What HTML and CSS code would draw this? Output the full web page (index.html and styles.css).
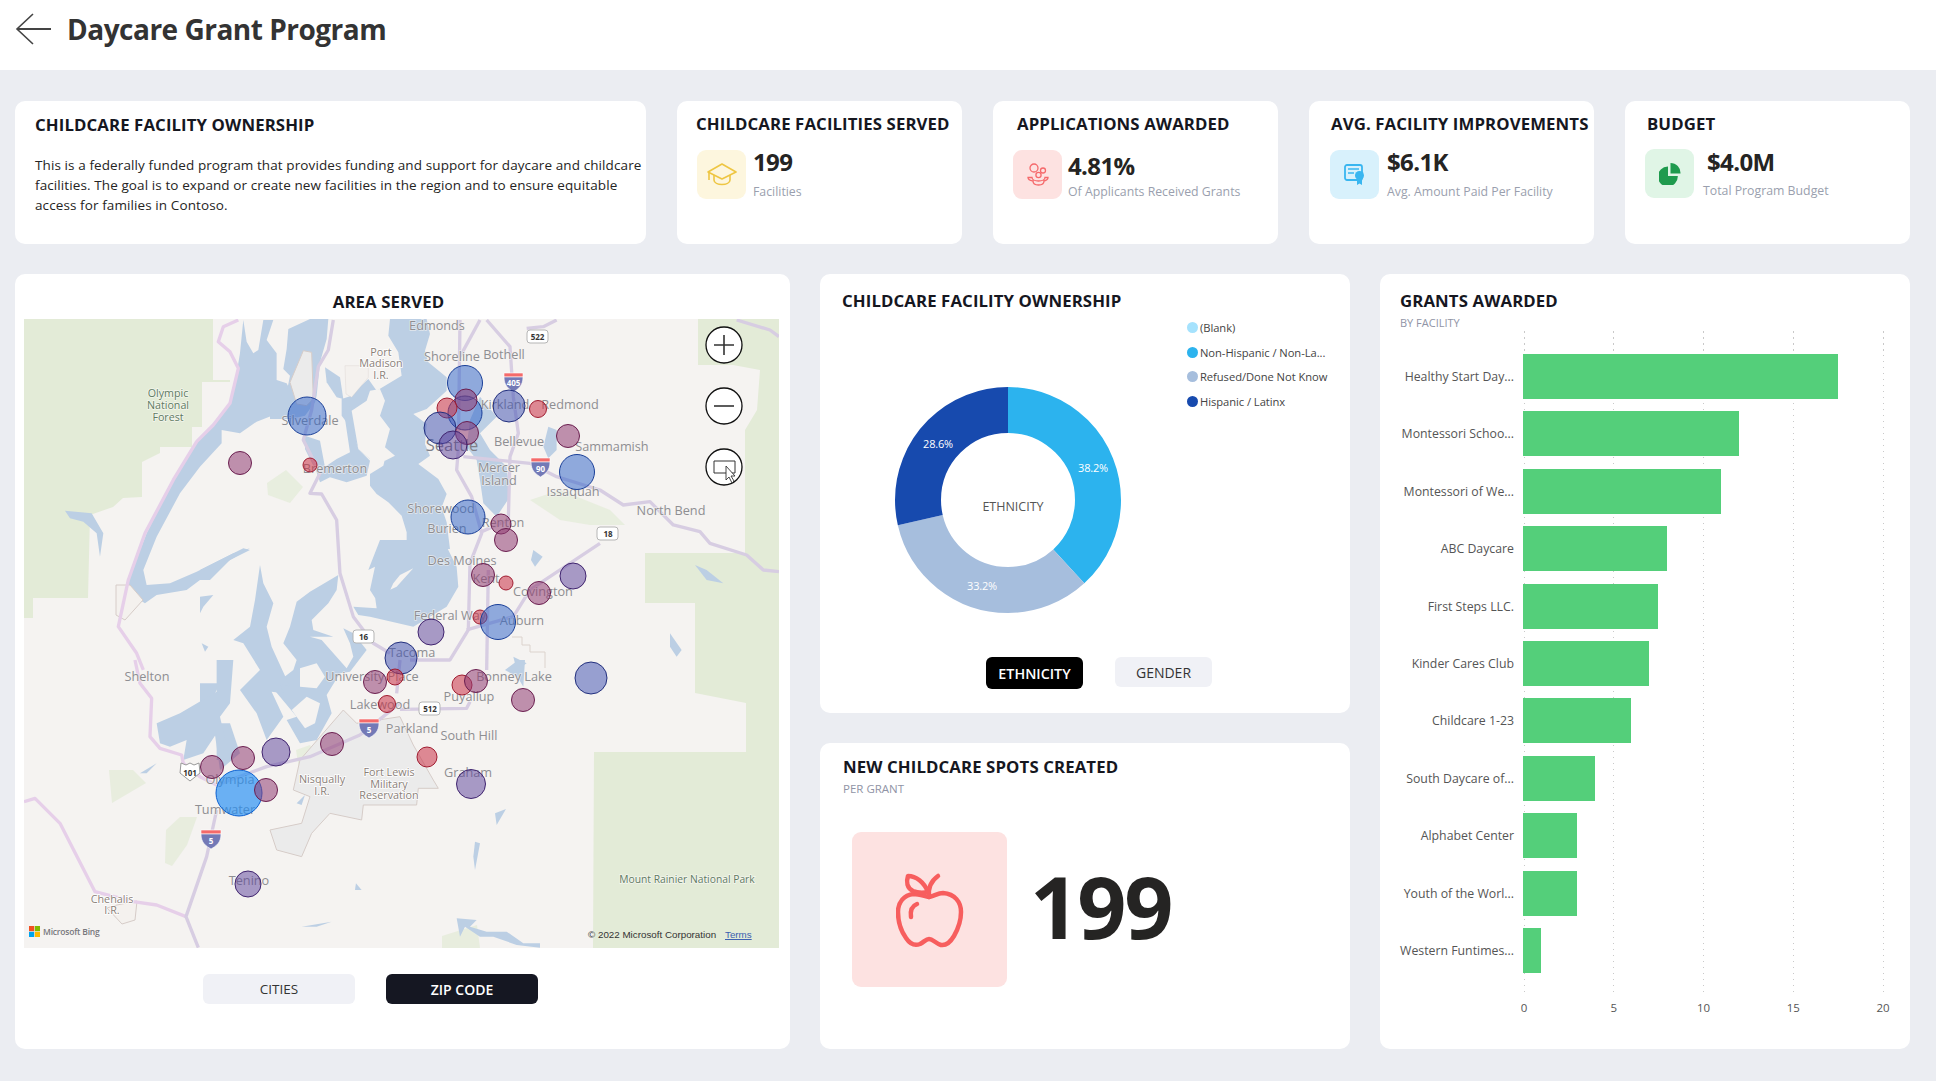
FILE: index.html
```html
<!DOCTYPE html>
<html lang="en">
<head>
<meta charset="utf-8">
<title>Daycare Grant Program</title>
<link rel="stylesheet" href="styles.css">
</head>
<body>
<div class="page">
  <header class="header">
    <svg class="back" viewBox="0 0 36 32" width="36" height="32"><path d="M18 1 2 16l16 15" fill="none" stroke="#444" stroke-width="1.6"/><path d="M2 16h34" stroke="#444" stroke-width="2.2"/></svg>
    <h1 class="page-title">Daycare Grant Program</h1>
  </header>

  <main class="dash">
    <section class="kpis">
      <article class="card about">
        <h2 class="title">CHILDCARE FACILITY OWNERSHIP</h2>
        <p class="about-text">This is a federally funded program that provides funding and support for daycare and childcare facilities. The goal is to expand or create new facilities in the region and to ensure equitable access for families in Contoso.</p>
      </article>

      <article class="card kpi kpi-a">
        <h2 class="title">CHILDCARE FACILITIES SERVED</h2>
        <div class="kpi-body">
          <div class="icon-box bg-yellow">
            <svg width="30" height="23" viewBox="0 0 30 23" fill="none" stroke="#eec643" stroke-width="1.6" stroke-linejoin="round"><path d="M15 1 29 9l-14 7L1 9z"/><path d="M7 12v5c0 6 16 6 16 0v-5"/><path d="M2 9v8"/></svg>
          </div>
          <div class="kpi-text">
            <div class="kpi-value">199</div>
            <div class="kpi-sub">Facilities</div>
          </div>
        </div>
      </article>

      <article class="card kpi kpi-b">
        <h2 class="title">APPLICATIONS AWARDED</h2>
        <div class="kpi-body">
          <div class="icon-box bg-red">
            <svg width="22" height="23" viewBox="0 0 22 23" fill="none" stroke="#f5696b" stroke-width="1.3"><circle cx="7" cy="5" r="4"/><circle cx="16" cy="7.5" r="2.5"/><circle cx="11.5" cy="12" r="2.6"/><path d="M1 14.5h4c0 2 3 3.5 6.500 3.500S18 16.500 18 14.500h3c0 2-2 3-4 3.500 0 2.500-2 4-5.500 4S6 20.500 6 18c-3-.5-5-1.500-5-3.500z"/></svg>
          </div>
          <div class="kpi-text">
            <div class="kpi-value">4.81%</div>
            <div class="kpi-sub">Of Applicants Received Grants</div>
          </div>
        </div>
      </article>

      <article class="card kpi kpi-c">
        <h2 class="title">AVG. FACILITY IMPROVEMENTS</h2>
        <div class="kpi-body">
          <div class="icon-box bg-blue">
            <svg width="21" height="22" viewBox="0 0 21 22"><rect x="1" y="1" width="17" height="15" rx="2" fill="none" stroke="#39b6f0" stroke-width="1.8"/><path d="M4 5h11M4 9h6" stroke="#39b6f0" stroke-width="1.6"/><path d="M13 14v7l2.500-1.500L18 21v-7z" fill="#39b6f0"/><circle cx="15.500" cy="11.500" r="4.500" fill="#39b6f0"/></svg>
          </div>
          <div class="kpi-text">
            <div class="kpi-value">$6.1K</div>
            <div class="kpi-sub">Avg. Amount Paid Per Facility</div>
          </div>
        </div>
      </article>

      <article class="card kpi kpi-d">
        <h2 class="title">BUDGET</h2>
        <div class="kpi-body">
          <div class="icon-box bg-green">
            <svg width="22" height="22" viewBox="0 0 22 22"><path d="M9 3.500V13h9.800A10 10 0 1 1 9 3.500z" fill="#1f9b4e"/><path d="M11.500 0A10 10 0 0 1 21.500 10.500h-10z" fill="#1f9b4e"/></svg>
          </div>
          <div class="kpi-text">
            <div class="kpi-value">$4.0M</div>
            <div class="kpi-sub">Total Program Budget</div>
          </div>
        </div>
      </article>
    </section>

    <section class="panels">
      <article class="card map-panel">
        <h2 class="title map-title">AREA SERVED</h2>
        <div class="map">
          <svg class="map-svg" viewBox="24 319 755 629" width="755" height="629">
            <rect class="land" x="24" y="319" width="755" height="629"/>
            <!-- forests -->
            <path class="forest" d="M24 319H213V380H230V382H202V427H192V447H160V453L142 462V497L123 498 113 507 90 515 88 598H33V618H24Z"/>
            <path class="forest" d="M698 319H779V948H593L594 752H746V703L695 693V603H645V553H745V430L757 410 760 370 733 365 698 365Z"/>
            <g class="patch">
              <path d="M267 483 286 470 303 487 290 503 268 495Z"/>
              <path d="M166 830 180 817 197 817 187 845 172 866 165 863Z"/>
              <path d="M109 770H133L146 783 112 803Z"/>
              <path d="M530 500 560 490 610 510 625 525 590 525 560 520Z"/>
              <path d="M296 750 310 745 332 775 300 775Z"/>
              <path d="M442 948V936L477 925 480 948Z"/>
            </g>

            <!-- reservation -->
            <g transform="translate(0 660) scale(.3333)">
              <path class="reserve" d="M1030 150 1070 190 1200 170 1240 255 1300 360 1315 385 1255 385 1250 435 1090 435 1085 480 990 460 935 520 905 590 830 570 810 510 905 490 930 410 880 390 900 300Z"/>
            </g>

            <!-- water: Hood canal and west side -->
            <g class="water" transform="translate(0 270) scale(.3333)">
              <path d="M730 150 720 250 710 310 690 400 650 450 590 510 520 630 440 790 385 930 380 965 435 1000 470 975 560 960 640 900 750 835 700 850 590 905 510 940 440 945 430 900 470 800 540 670 600 590 665 520 665 480 720 490 770 455 860 420 875 370 860 340 830 330 830 250 800 210 820 150 790 150 775 240 760 250 740 215Z"/>
              <path d="M195 722 275 730 310 790 300 860 290 790 250 755 210 745Z"/>
            </g>
            <!-- water: central sound -->
            <g class="water" transform="translate(270 319) scale(.3333)">
              <path d="M360 0 470 0 480 45 465 95 475 130 530 175 530 215 470 270 430 285 470 315 465 375 480 410 445 435 505 480 530 525 515 565 530 610 540 690 410 690 410 640 395 590 355 550 320 525 300 500 300 465 340 440 345 420 300 420 265 390 245 330 215 290 215 240 240 232 295 180 320 215 345 200 395 170 385 100 355 50Z"/>
              <path d="M165 145 210 175 220 240 200 235 170 190Z"/>
              <path d="M215 235 245 270 240 300 265 390 300 425 290 470 230 490 180 475 150 490 140 460 170 440 200 420 240 400 225 300Z"/>
              <path d="M105 350 150 365 165 445 140 460 120 420 105 390Z"/>
              <path d="M55 30 120 0 175 0 170 60 150 130 140 230 135 250 105 290 60 300 0 300 0 250 50 220 60 170 40 150 50 90Z"/>
            </g>
            <!-- water: lakes -->
            <g class="water" transform="translate(400 270) scale(.3333)">
              <path d="M240 380 290 440 240 490 270 540 320 590 330 680 290 740 250 700 240 630 230 570 200 530 210 450Z"/>
              <path d="M445 470 470 480 470 540 445 565 430 530Z"/>
              <path d="M400 840 428 860 405 890 393 870Z"/>
              <path d="M885 885 920 900 970 940 920 930Z"/>
              <path d="M810 1090 845 1140 830 1160 810 1130Z"/>
              <path d="M340 1160 380 1180 350 1200Z"/>
            </g>
            <!-- water: south sound -->
            <g class="water" transform="translate(200 540) scale(.3333)">
              <path d="M640 0 730 0 770 80 775 140 740 200 640 260 510 230 475 225 460 200 530 205 525 170 590 140 640 85 600 105 580 130 545 205 510 150 525 80 505 90 540 0Z"/>
              <path d="M415 105 330 155 290 185 270 260 250 310 290 360 280 390 215 440 290 530 260 540 300 610 350 600 395 520 380 465 420 400 450 395 500 330 460 280 430 265 450 310 460 350 440 385 365 300 330 290 400 290 340 270 335 240 385 190 410 150Z"/>
              <path d="M180 75 190 130 220 190 200 260 215 320 270 440 240 430 250 460 215 455 250 530 200 600 170 520 120 450 180 390 130 310 100 300 150 260 165 180Z"/>
              <path d="M0 90 130 25 150 30 90 60 30 120 0 120Z"/>
              <path d="M0 170 40 165 10 200 0 220Z"/>
              <path d="M0 430 60 430 40 470 0 530Z"/>
              <path d="M40 550 90 550 120 640 60 690Z"/>
              <path d="M5 310 25 320 15 335Z"/>
            </g>
            <g class="water" transform="translate(0 660) scale(.3333)">
              <path d="M480 250 470 190 540 160 650 95 650 0 700 0 690 130 660 170 690 300 650 300 650 220 610 280 550 300 560 240 510 260Z"/>
              <path d="M420 340 470 310 440 340Z"/>
              <path d="M890 430 915 405 905 435Z"/>
              <path d="M905 800 995 785 950 800Z"/>
              <path d="M1068 670 1085 690H1065Z"/>
              <path d="M765 575 785 565 760 578Z"/>
            </g>
            <g class="water" transform="translate(400 660) scale(.3333)">
              <path d="M170 775 230 780 210 800 260 815 320 815 370 850 420 850 420 863 350 855 280 830 240 830 195 800 180 830Z"/>
              <path d="M285 460 318 447 290 495Z"/>
              <path d="M225 545 240 550 225 630 220 590Z"/>
              <path d="M355 0 375 0 370 80 352 50 315 30Z"/>
            </g>
            <!-- land on top of the water -->
            <g class="land" transform="translate(270 319) scale(.3333)">
              <path d="M245 275 290 245 300 215 330 210 345 245 330 290 360 330 345 385 375 410 345 425 300 420 265 390Z"/>
            </g>
            <g class="land" transform="translate(200 540) scale(.3333)">
              <path d="M300 385 350 370 375 410 350 445 300 440Z"/>
              <path d="M275 510 320 470 360 490 345 550 315 565Z"/>
            </g>
            <g transform="translate(270 319) scale(.3333)">
              <path class="reserve" d="M100 95 125 100 130 240 110 260 80 255 60 190Z"/>
              <path class="reserve tint" d="M225 140H295V175L245 235 228 225Z"/>
            </g>
            <path class="reserve tint" d="M117 905 137 901 135 920 122 924 107 908Z"/>
            <path class="reserve tint" d="M116 585H130L143 600 125 620 116 615Z"/>
            <path class="outline" d="M512 637H522V645H530V652H545V668"/>

            <!-- roads -->
            <g class="road pink" transform="translate(0 270) scale(.3333)">
              <path d="M715 150 670 170 655 215 690 245 715 295 690 400 640 465 590 515 520 630 435 790 385 930 355 1070 410 1150 430 1200"/>
            </g>
            <g class="road pink" transform="translate(0 660) scale(.3333)">
              <path d="M405 0 420 70 455 115 450 230 480 265 545 285 550 310 600 350 650 375"/>
              <path d="M558 770 470 735 400 725 285 695 180 490 105 415 72 425"/>
            </g>
            <g class="road" transform="translate(0 270) scale(.3333)">
              <path d="M1000 150 985 240 955 290 935 420 910 510 960 610 930 670 965 672 1010 750 1020 910 1060 1040 1120 1120 1170 1150"/>
            </g>
            <g class="road" transform="translate(0 660) scale(.3333)">
              <path d="M650 450 620 590 558 770 595 863"/>
              <path d="M650 375 800 320 930 290 1080 225 1200 130"/>
            </g>
            <g class="road" transform="translate(400 270) scale(.3333)">
              <path d="M180 150 175 540 170 600 215 680 245 790 210 880 205 1080 150 1170 30 1170"/>
              <path d="M260 150 330 230 340 380 355 490 330 560 325 750 245 785"/>
              <path d="M190 560 390 580 470 620 600 660 670 705 750 695 820 765 900 785 930 820 1040 855 1090 900 1137 905"/>
              <path d="M200 1080 340 1040 390 960 600 820"/>
              <path d="M265 900 260 1200"/>
              <path d="M1010 150 1110 180 1137 200"/>
              <path d="M180 260 240 150"/>
              <path d="M470 150 430 170 380 175"/>
            </g>
            <g class="road" transform="translate(400 660) scale(.3333)">
              <path d="M0 148 200 145 210 125"/>
              <path d="M-10 100 0 0"/>
            </g>

            <!-- labels -->
            <g class="lbl-green">
              <text x="168" y="397">Olympic</text><text x="168" y="409">National</text><text x="168" y="421">Forest</text>
              <text class="lbl-park" x="687" y="883">Mount Rainier National Park</text>
            </g>
            <g class="lbl-small">
              <text x="381" y="356">Port</text><text x="381" y="367">Madison</text><text x="381" y="379">I.R.</text>
              <text x="322" y="783">Nisqually</text><text x="322" y="795">I.R.</text>
              <text x="389" y="776">Fort Lewis</text><text x="389" y="788">Military</text><text x="389" y="799">Reservation</text>
              <text x="112" y="903">Chehalis</text><text x="112" y="914">I.R.</text>
            </g>
            <g class="lbl">
              <text x="437" y="330">Edmonds</text><text x="452" y="361">Shoreline</text><text x="504" y="359">Bothell</text>
              <text x="310" y="425">Silverdale</text><text x="335" y="473">Bremerton</text>
              <text x="505" y="409">Kirkland</text><text x="570" y="409">Redmond</text><text x="519" y="446">Bellevue</text>
              <text x="612" y="451">Sammamish</text><text x="499" y="472">Mercer</text><text x="499" y="485">Island</text>
              <text x="573" y="496">Issaquah</text><text x="671" y="515">North Bend</text><text x="441" y="513">Shorewood</text>
              <text x="447" y="533">Burien</text><text x="503" y="527">Renton</text><text x="462" y="565">Des Moines</text>
              <text x="486" y="583">Kent</text><text x="543" y="596">Covington</text><text x="450" y="620">Federal Way</text>
              <text x="522" y="625">Auburn</text><text x="412" y="657">Tacoma</text><text x="147" y="681">Shelton</text>
              <text x="372" y="681">University Place</text><text x="380" y="709">Lakewood</text><text x="412" y="733">Parkland</text>
              <text x="469" y="740">South Hill</text><text x="469" y="701">Puyallup</text><text x="514" y="681">Bonney Lake</text>
              <text x="468" y="777">Graham</text><text x="230" y="784">Olympia</text><text x="225" y="814">Tumwater</text>
              <text x="249" y="885">Tenino</text>
            </g>
            <text class="lbl-city" x="452" y="451">Seattle</text>

            <!-- road shields -->
            <g class="shield"><rect x="527" y="330" width="21" height="13" rx="3"/><text x="537.500" y="340">522</text></g>
            <g class="shield"><rect x="597" y="527" width="21" height="13" rx="3"/><text x="608" y="537">18</text></g>
            <g class="shield"><rect x="353" y="630" width="21" height="13" rx="3"/><text x="363.500" y="640">16</text></g>
            <g class="shield"><rect x="419" y="702" width="21" height="13" rx="3"/><text x="430" y="712">512</text></g>
            <g class="shield us"><path d="M181 763 186 765 190 763 194 765 199 763 200 773 190 781 180 773Z"/><text x="190" y="776">101</text></g>
            <g class="interstate"><path class="i-red" d="M504 373H523V377H504Z"/><path class="i-blue" d="M504 377H523C523 386 518 389 513.500 392 509 389 504 386 504 377Z"/><text x="513.500" y="386">405</text></g>
            <g class="interstate"><path class="i-red" d="M531 458H550V462H531Z"/><path class="i-blue" d="M531 462H550C550 471 545 474 540.500 477 536 474 531 471 531 462Z"/><text x="540.500" y="472">90</text></g>
            <g class="interstate"><path class="i-red" d="M359 719H379V723H359Z"/><path class="i-blue" d="M359 723H379C379 732 374 735 369 738 364 735 359 732 359 723Z"/><text x="369" y="733">5</text></g>
            <g class="interstate"><path class="i-red" d="M201 830H221V834H201Z"/><path class="i-blue" d="M201 834H221C221 843 216 846 211 849 206 846 201 843 201 834Z"/><text x="211" y="844">5</text></g>

            <!-- data bubbles -->
            <circle class="b-blue" cx="307" cy="416" r="19"/>
            <circle class="b-plum" cx="240" cy="463" r="11.500"/>
            <circle class="b-red" cx="310" cy="465" r="7"/>
            <circle class="b-blue" cx="465" cy="383" r="17.500"/>
            <circle class="b-blue" cx="465" cy="413" r="17"/>
            <circle class="b-plum" cx="466" cy="400" r="11"/>
            <circle class="b-red" cx="447" cy="408" r="10"/>
            <circle class="b-indigo" cx="509" cy="406" r="16"/>
            <circle class="b-red" cx="538" cy="409" r="8.500"/>
            <circle class="b-indigo" cx="440" cy="428" r="16"/>
            <circle class="b-plum" cx="467" cy="433" r="11.500"/>
            <circle class="b-purple" cx="453" cy="445" r="14"/>
            <circle class="b-plum" cx="568" cy="436" r="11.500"/>
            <circle class="b-blue" cx="577" cy="472" r="17.500"/>
            <circle class="b-blue" cx="468" cy="517" r="17"/>
            <circle class="b-plum" cx="501" cy="524" r="10"/>
            <circle class="b-plum" cx="506" cy="540" r="11.500"/>
            <circle class="b-plum" cx="483" cy="575" r="11.500"/>
            <circle class="b-red" cx="506" cy="583" r="7"/>
            <circle class="b-purple" cx="573" cy="576" r="13"/>
            <circle class="b-plum" cx="539" cy="593" r="11.500"/>
            <circle class="b-red" cx="480" cy="617" r="7"/>
            <circle class="b-blue" cx="498" cy="622" r="17.500"/>
            <circle class="b-purple" cx="431" cy="632" r="13"/>
            <circle class="b-indigo" cx="401" cy="658" r="16"/>
            <circle class="b-sky" cx="239" cy="793" r="23"/>
            <circle class="b-plum" cx="266" cy="790" r="11.500"/>
            <circle class="b-plum" cx="212" cy="767" r="11.500"/>
            <circle class="b-plum" cx="243" cy="758" r="11.500"/>
            <circle class="b-purple" cx="276" cy="752" r="14"/>
            <circle class="b-plum" cx="332" cy="744" r="11.500"/>
            <circle class="b-purple" cx="248" cy="884" r="13"/>
            <circle class="b-plum" cx="375" cy="682" r="11.500"/>
            <circle class="b-red" cx="395" cy="677" r="8"/>
            <circle class="b-red" cx="387" cy="704" r="8.500"/>
            <circle class="b-red" cx="462" cy="685" r="10"/>
            <circle class="b-plum" cx="476" cy="681" r="11.500"/>
            <circle class="b-plum" cx="523" cy="700" r="11.500"/>
            <circle class="b-indigo" cx="591" cy="678" r="16"/>
            <circle class="b-red" cx="427" cy="757" r="10"/>
            <circle class="b-purple" cx="471" cy="784" r="14.500"/>

            <!-- map controls -->
            <g class="ctl"><circle cx="724" cy="345" r="18"/><path d="M724 335v20M714 345h20"/></g>
            <g class="ctl"><circle cx="724" cy="406" r="18"/><path d="M714 406h20"/></g>
            <g class="ctl"><circle cx="724" cy="467" r="18"/><path class="thin" d="M735 473H714V461H735V473"/><path class="cursor" d="M726 466V480L729 477 732 483 734 481 731 476H735Z"/></g>

            <!-- attribution -->
            <g><rect x="29" y="926" width="5.200" height="5.200" fill="#f25022"/><rect x="34.800" y="926" width="5.200" height="5.200" fill="#7fba00"/><rect x="29" y="931.800" width="5.200" height="5.200" fill="#00a4ef"/><rect x="34.800" y="931.800" width="5.200" height="5.200" fill="#ffb900"/></g>
            <text class="bing" x="43" y="935">Microsoft Bing</text>
            <text class="copy" x="588" y="938">© 2022 Microsoft Corporation</text>
            <text class="terms" x="725" y="938">Terms</text>
          </svg>
        </div>
        <div class="btn-row map-btns">
          <button class="btn btn-map">CITIES</button>
          <button class="btn btn-map btn-on">ZIP CODE</button>
        </div>
      </article>

      <div class="mid">
        <article class="card donut-panel">
          <h2 class="title">CHILDCARE FACILITY OWNERSHIP</h2>
          <div class="donut-body">
            <svg class="donut" viewBox="0 0 240 240" width="240" height="240">
              <g fill="none" stroke-width="46" transform="rotate(-90 120 120)">
                <circle cx="120" cy="120" r="90" pathLength="100" stroke="#2cb3ee" stroke-dasharray="38.200 61.800"/>
                <circle cx="120" cy="120" r="90" pathLength="100" stroke="#a6bedd" stroke-dasharray="33.200 66.800" stroke-dashoffset="-38.200"/>
                <circle cx="120" cy="120" r="90" pathLength="100" stroke="#174aae" stroke-dasharray="28.600 71.400" stroke-dashoffset="-71.400"/>
              </g>
              <text class="pct" x="205" y="92">38.2%</text>
              <text class="pct" x="94" y="210">33.2%</text>
              <text class="pct" x="50" y="68">28.6%</text>
              <text class="donut-center" x="125" y="131">ETHNICITY</text>
            </svg>
            <ul class="legend">
              <li class="legend-item"><span class="dot d-blank"></span>(Blank)</li>
              <li class="legend-item"><span class="dot d-non"></span>Non-Hispanic / Non-La...</li>
              <li class="legend-item"><span class="dot d-ref"></span>Refused/Done Not Know</li>
              <li class="legend-item"><span class="dot d-his"></span>Hispanic / Latinx</li>
            </ul>
          </div>
          <div class="btn-row donut-btns">
            <button class="btn btn-donut btn-black">ETHNICITY</button>
            <button class="btn btn-donut">GENDER</button>
          </div>
        </article>

        <article class="card spots-panel">
          <h2 class="title">NEW CHILDCARE SPOTS CREATED</h2>
          <div class="sub">PER GRANT</div>
          <div class="spots-body">
            <div class="spots-icon">
              <svg width="68" height="76" viewBox="-2 -2 68 76" fill="none" stroke="#f75e5e" stroke-width="4.500" stroke-linecap="round" stroke-linejoin="round">
                <path d="M31 23C26 22 21 20 15.500 20 6 21 0 28 0 38 0 47 3 57 8 64 12 70 17 72 22 70 26 68 28 65 31 65 35 65 37 69 43 71 49 72 53 67 56 62 60 55 63 47 63 38 63 28 57 20 45 19 40 19 36 22 31 23Z"/>
                <path d="M31 23C30 15 33 7 40 2"/>
                <path d="M30 18C26 8 18 2 10 2 8 8 9 14 15 17 20 19 25 19 30 18Z"/>
                <path d="M19 30C14 32 12 36 13 43"/>
              </svg>
            </div>
            <div class="spots-value">199</div>
          </div>
        </article>
      </div>

      <article class="card grants-panel">
        <h2 class="title">GRANTS AWARDED</h2>
        <div class="sub">BY FACILITY</div>
        <div class="chart">
          <div class="gridlines"><i></i><i></i><i></i><i></i><i></i></div>
          <div class="rows">
            <div class="row"><span class="row-label">Healthy Start Day...</span><span class="bar" style="width:315px"></span></div>
            <div class="row"><span class="row-label">Montessori Schoo...</span><span class="bar" style="width:216px"></span></div>
            <div class="row"><span class="row-label">Montessori of We...</span><span class="bar" style="width:198px"></span></div>
            <div class="row"><span class="row-label">ABC Daycare</span><span class="bar" style="width:144px"></span></div>
            <div class="row"><span class="row-label">First Steps LLC.</span><span class="bar" style="width:135px"></span></div>
            <div class="row"><span class="row-label">Kinder Cares Club</span><span class="bar" style="width:126px"></span></div>
            <div class="row"><span class="row-label">Childcare 1-23</span><span class="bar" style="width:108px"></span></div>
            <div class="row"><span class="row-label">South Daycare of...</span><span class="bar" style="width:72px"></span></div>
            <div class="row"><span class="row-label">Alphabet Center</span><span class="bar" style="width:54px"></span></div>
            <div class="row"><span class="row-label">Youth of the Worl...</span><span class="bar" style="width:54px"></span></div>
            <div class="row"><span class="row-label">Western Funtimes...</span><span class="bar" style="width:18px"></span></div>
          </div>
        </div>
        <div class="ticks"><span>0</span><span>5</span><span>10</span><span>15</span><span>20</span></div>
      </article>
    </section>
  </main>
</div>
</body>
</html>
```

FILE: styles.css
```css
* { box-sizing: border-box; }
html, body { margin: 0; padding: 0; }
body { font-family: "Open Sans", "Noto Sans", sans-serif; color: #252423; background: #ebedf2; }
.page { min-height: 1081px; background: #ebedf2; }

.header { height: 70px; background: #fff; display: flex; align-items: center; padding: 0 0 12px 15px; gap: 16px; }
.back { display: block; }
.page-title { margin: 0; font-size: 28px; line-height: 36px; font-weight: 700; color: #333; letter-spacing: -0.5px; }

.dash { padding: 31px 26px 32px 15px; display: flex; flex-direction: column; gap: 30px; }
.card { background: #fff; border-radius: 10px; }
.title { margin: 0; font-size: 16.800px; line-height: 18px; font-weight: 700; color: #16171f; white-space: nowrap; letter-spacing: 0.1px; }
.sub { font-size: 11.5px; line-height: 16px; color: #9094a6; }

.kpis { display: grid; grid-template-columns: 631px repeat(4, 285px); column-gap: 31px; height: 143px; }
.about { padding: 15px 0 0 20px; }
.about-text { width: 611px; font-size: 13.500px; line-height: 20px; color: #252423; letter-spacing: 0.1px; margin: 21px 0 0; }

.kpi { padding-top: 14px; }
.kpi-body { display: flex; margin-top: 17px; }
.icon-box { width: 49px; height: 49px; border-radius: 9px; display: flex; align-items: center; justify-content: center; flex: none; }
.bg-yellow { background: #fdf6de; }
.bg-red { background: #fde2e1; }
.bg-blue { background: #d8f1fc; }
.bg-green { background: #e0f5e6; }
.kpi-text { margin-top: -3px; }
.kpi-value { font-size: 24px; line-height: 30px; font-weight: 700; color: #252423; letter-spacing: -0.6px; }
.kpi-sub { font-size: 12.300px; line-height: 16px; margin-top: 7px; color: #9a9fae; white-space: nowrap; }

.kpi-a { padding-left: 19px; }
.kpi-a .icon-box { margin-left: 1px; margin-right: 7px; }
.kpi-b { padding-left: 24px; }
.kpi-b .icon-box { margin-left: -4px; margin-right: 6px; }
.kpi-b .kpi-value { margin-top: 4px; }
.kpi-b .kpi-sub { margin-top: 3px; }
.kpi-c { padding-left: 22px; }
.kpi-c .icon-box { margin-left: -1px; margin-right: 8px; }
.kpi-d { padding-left: 22px; }
.kpi-d .kpi-body { margin-top: 16px; }
.kpi-d .icon-box { margin-left: -2px; margin-right: 9px; }
.kpi-d .kpi-value { margin-top: 1px; margin-left: 4px; }
.kpi-d .kpi-sub { margin-top: 6px; }

.panels { display: grid; grid-template-columns: 775px 530px 530px; column-gap: 30px; height: 775px; }
.map-panel { padding: 19px 0 0 9px; }
.map-title { text-align: center; padding-right: 37px; }
.map { width: 755px; height: 629px; margin-top: 8px; overflow: hidden; }
.map-svg { display: block; font-family: "Open Sans", sans-serif; }

.land { fill: #f5f3f1; }
.forest { fill: #e3ebd7; }
.patch { fill: #e3ebd7; opacity: .7; }
.water { fill: #bccfe4; }
.reserve { fill: #ebebeb; stroke: #d6ccc8; stroke-width: 3; }
.tint { fill: #f4f1ee; stroke-width: 1; }
.outline { fill: none; stroke: #dcd3cd; stroke-width: 1; }
.road { fill: none; stroke: #d7cde2; stroke-width: 10; stroke-linejoin: round; }
.pink { stroke: #e6cfe9; }

.lbl text, .lbl-small text, .lbl-green text, .lbl-city { text-anchor: middle; paint-order: stroke; stroke-width: 1.500px; }
.lbl text { font-size: 12.700px; fill: #8e8e92; stroke: #f5f3f1; stroke-opacity: .7; }
.lbl-small text { font-size: 10.800px; fill: #8a8078; stroke: #fff; }
.lbl-green text { font-size: 10.700px; fill: #5f7a62; stroke: #f4f6ee; }
.lbl-green .lbl-park { font-size: 10.300px; }
.lbl-city { font-size: 16.500px; fill: #7f7f88; stroke: none; }

.shield rect { fill: #fff; stroke: #b5b5b5; stroke-width: 1; }
.shield text { font-size: 8px; font-weight: 700; text-anchor: middle; fill: #333; }
.us path { fill: #fff; stroke: #999; stroke-width: 1; }
.i-red { fill: #f46a6a; }
.i-blue { fill: #7379b6; }
.interstate path { stroke: #fff; stroke-width: .6; }
.interstate text { font-size: 8px; font-weight: 700; text-anchor: middle; fill: #fff; }

.b-red { fill: #c92f45; fill-opacity: .55; stroke: #a01c30; stroke-width: 1; }
.b-plum { fill: #8f3d72; fill-opacity: .55; stroke: #6b1f50; stroke-width: 1; }
.b-purple { fill: #5a3f9a; fill-opacity: .5; stroke: #40246f; stroke-width: 1; }
.b-indigo { fill: #3a4bb0; fill-opacity: .5; stroke: #23307e; stroke-width: 1; }
.b-blue { fill: #2a5fc8; fill-opacity: .5; stroke: #1a3f98; stroke-width: 1; }
.b-sky { fill: #1e8cf5; fill-opacity: .65; stroke: #0a5fd0; stroke-width: 1; }

.ctl circle { fill: #fff; stroke: #111; stroke-width: 1.300; }
.ctl path { fill: none; stroke: #333; stroke-width: 1.600; }
.ctl .thin { stroke-width: 1; }
.ctl .cursor { fill: #fff; stroke: #333; stroke-width: .9; }

.bing { font-size: 8.500px; font-weight: 600; fill: #77777c; letter-spacing: -0.2px; }
.copy { font-family: "Liberation Sans", sans-serif; font-size: 9.800px; fill: #333; }
.terms { font-family: "Liberation Sans", sans-serif; font-size: 9.800px; fill: #3b5fb0; text-decoration: underline; }

.btn-row { display: flex; }
.btn { display: block; padding: 0; border: 0; border-radius: 6px; background: #f0f1f6; font-family: inherit; color: #333; font-weight: 400; }
.map-btns { margin-top: 26px; margin-left: 179px; gap: 31px; }
.btn-map { width: 152px; height: 30px; font-size: 13.500px; }
.btn-on { background: #151722; color: #fff; font-weight: 600; font-size: 14px; }

.mid { display: flex; flex-direction: column; gap: 30px; }
.donut-panel { height: 439px; padding: 18px 0 0 22px; }
.donut-body { display: flex; align-items: flex-start; gap: 59px; margin-top: 5px; margin-left: 46px; height: 304px; }
.donut { display: block; margin-top: 65px; font-family: "Open Sans", sans-serif; }
.pct { font-size: 11px; fill: #fff; text-anchor: middle; letter-spacing: -0.2px; }
.donut-center { font-size: 12.500px; fill: #555; text-anchor: middle; }
.legend { list-style: none; margin: 0; padding: 0; }
.legend-item { display: flex; align-items: center; height: 24.700px; font-size: 11.200px; color: #444; white-space: nowrap; letter-spacing: -0.05px; }
.dot { width: 11px; height: 11px; border-radius: 50%; margin-right: 2px; flex: none; }
.d-blank { background: #a5e2fd; }
.d-non { background: #2cb3ee; }
.d-ref { background: #a6bedd; }
.d-his { background: #174aae; }
.donut-btns { margin-top: 38px; margin-left: 144px; gap: 32px; align-items: flex-start; }
.btn-donut { width: 97px; height: 30px; font-size: 14px; }
.btn-black { height: 32px; background: #000; color: #fff; font-weight: 600; font-size: 14.300px; }

.spots-panel { height: 306px; padding: 15px 0 0 23px; }
.spots-panel .sub { margin-top: 5px; }
.spots-body { display: flex; align-items: center; gap: 23px; margin-top: 35px; margin-left: 9px; }
.spots-icon { width: 155px; height: 155px; border-radius: 9px; background: #fde2e1; display: flex; align-items: center; justify-content: center; }
.spots-value { font-size: 86px; line-height: 120px; font-weight: 700; color: #252423; letter-spacing: -2px; margin-top: -7px; }

.grants-panel { padding: 18px 0 0 20px; }
.grants-panel .sub { margin-top: 6px; line-height: 14px; font-size: 11px; }
.chart { position: relative; height: 662px; margin: 1px 0 0 -20px; }
.gridlines { position: absolute; top: 0; bottom: 0; left: 143.500px; width: 360px; display: flex; justify-content: space-between; }
.gridlines i { width: 1px; background: repeating-linear-gradient(to bottom, #c9c9c9 0 1.500px, transparent 1.500px 6px); }
.rows { position: relative; padding-top: 23px; display: flex; flex-direction: column; gap: 12.400px; }
.row { display: flex; align-items: center; height: 45px; }
.row-label { width: 134px; margin-right: 9px; text-align: right; font-size: 12.300px; color: #555; white-space: nowrap; }
.bar { display: block; height: 45px; background: #54cf7a; }
.ticks { display: flex; justify-content: space-between; width: 360px; margin-left: 123.500px; margin-top: 7px; font-size: 11.500px; line-height: 16px; color: #555; }
.ticks span { width: 1px; display: flex; justify-content: center; }
```
